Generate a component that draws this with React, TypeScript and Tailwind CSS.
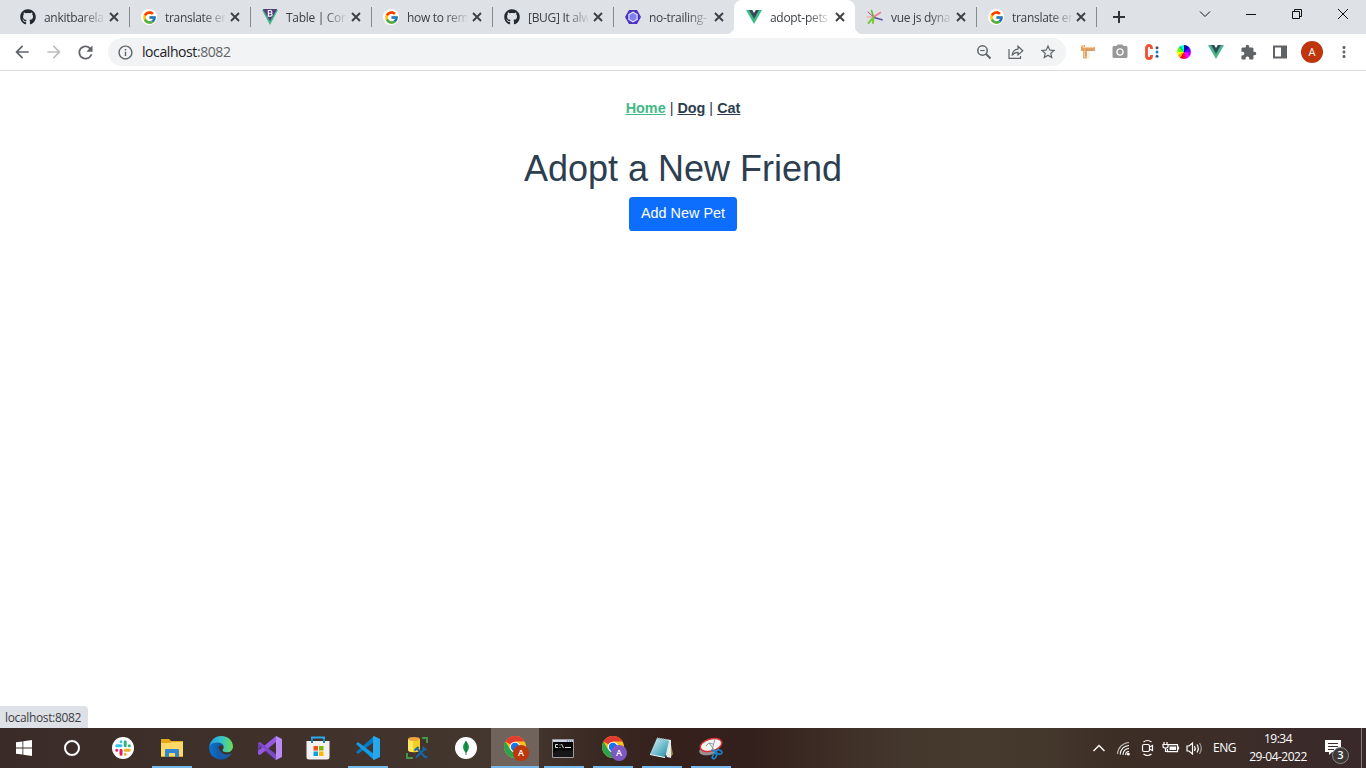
import React from "react";
import { FaGithub } from "react-icons/fa";
import { FcGoogle } from "react-icons/fc";
import {
  MdArrowBack,
  MdArrowForward,
  MdExtension,
  MdInfoOutline,
  MdMoreVert,
  MdPhotoCamera,
  MdRefresh,
  MdStarBorder,
} from "react-icons/md";

const ui = "font-['Open_Sans','Noto_Sans',sans-serif]";

function VueLogo({ size = 16 }: { size?: number }) {
  return (
    <svg width={size} height={size} viewBox="0 0 16 16">
      <path d="M0 1h16L8 15z" fill="#41b883" />
      <path d="M3 1h10L8 9.8z" fill="#34495e" />
      <path d="M6.2 1h3.6L8 4z" fill="#fff" />
    </svg>
  );
}

function BootstrapVue() {
  return (
    <svg width="16" height="16" viewBox="0 0 16 16">
      <path d="M0 1h3l5 9 5-9h3L8 16z" fill="#41b883" />
      <path d="M.8 0h14.400L8 12z" fill="#563d7c" />
      <path d="M6.300 1.500h2.200a1.400 1.400 0 010 2.800H6.300zM6.300 4.300h2.400a1.400 1.400 0 010 2.800H6.300z" fill="none" stroke="#fff" strokeWidth="1.100" />
    </svg>
  );
}

function GoogleDot() {
  return (
    <span className="flex size-4 shrink-0 items-center justify-center rounded-full bg-white">
      <FcGoogle size={15} />
    </span>
  );
}

function Hexagon() {
  return (
    <svg width="16" height="16" viewBox="0 0 16 16">
      <path d="M4 1h8l4 7-4 7H4L0 8z" fill="#4b32c3" />
      <path d="M8 2.600l4.700 2.700v5.400L8 13.400l-4.700-2.700V5.300z" fill="#e8e8fc" />
      <path d="M8 3.800l3.600 2.100v4.200L8 12.200l-3.600-2.100V5.900z" fill="#8080f2" />
    </svg>
  );
}

function Splash() {
  return (
    <svg width="16" height="16" viewBox="0 0 16 16" fill="none" strokeLinecap="round" className="shrink-0 overflow-visible">
      <path d="M6.500 8L4.500 1.500" stroke="#61bd3a" strokeWidth="1.600" />
      <path d="M6.500 8l7-4.500" stroke="#ec7b8e" strokeWidth="1.500" />
      <path d="M6 7.500L1 3" stroke="#a45087" strokeWidth="1" />
      <path d="M6 8H0" stroke="#f09b84" strokeWidth="1" />
      <path d="M7 8.500l8 2.300" stroke="#654fa8" strokeWidth="1.700" />
      <path d="M6.500 8.500L1.500 14M6.500 8.500L6 14" stroke="#75c93b" strokeWidth="2" />
    </svg>
  );
}

type Tab = { title: string; icon: React.ReactNode; active?: boolean; line?: boolean };

const tabs: Tab[] = [
  { title: "ankitbarela", icon: <FaGithub size={16} className="text-[#24292f]" />, line: true },
  { title: "translate en", icon: <GoogleDot />, line: true },
  { title: "Table | Com", icon: <BootstrapVue />, line: true },
  { title: "how to rem", icon: <GoogleDot />, line: true },
  { title: "[BUG] It alw", icon: <FaGithub size={16} className="text-[#24292f]" />, line: true },
  { title: "no-trailing-", icon: <Hexagon /> },
  { title: "adopt-pets", icon: <VueLogo />, active: true },
  { title: "vue js dyna", icon: <Splash />, line: true },
  { title: "translate en", icon: <GoogleDot />, line: true },
];

function TabStrip() {
  return (
    <div className="flex h-[34px] bg-[#dee1e6] pl-2 text-[#3c4043]">
      {tabs.map((t, i) => (
        <div
          key={i}
          className={
            "relative flex h-[34px] shrink-0 items-center pl-3 " +
            (i === 8 ? "w-[120px] " : "w-[121px] ") +
            (t.active ? "rounded-t-lg bg-white" : "")
          }
        >
          {t.active && (
            <>
              <span className="absolute bottom-0 -left-2 size-2 bg-[radial-gradient(circle_at_0_0,#dee1e6_8px,#fff_8.5px)]" />
              <span className="absolute -right-2 bottom-0 size-2 bg-[radial-gradient(circle_at_100%_0,#dee1e6_8px,#fff_8.5px)]" />
            </>
          )}
          <span className="flex w-4 shrink-0 justify-center">{t.icon}</span>
          <span className="ml-2 w-[60px] shrink-0 overflow-hidden pt-px text-[12px] tracking-[-0.3px] whitespace-nowrap [mask-image:linear-gradient(to_right,#000_38px,transparent_62px)]">
            {t.title}
          </span>
          <svg
            width="10"
            height="10"
            viewBox="0 0 10 10"
            stroke="#3c4043"
            strokeWidth="1.900"
            className={"shrink-0 " + (i === 8 ? "ml-1" : "ml-[5px]")}
          >
            <path d="M1 1l8 8M9 1L1 9" />
          </svg>
          {(t.line || i === 5) && (
            <span className="absolute top-[7px] right-[-1px] h-5 w-px bg-[#85888c]" />
          )}
        </div>
      ))}
      <div className="flex w-[45px] items-center justify-center">
        <svg width="12" height="12" viewBox="0 0 12 12" stroke="#303337" strokeWidth="2">
          <path d="M6 0v12M0 6h12" />
        </svg>
      </div>
      <svg className="ml-auto" width="184" height="28" viewBox="0 0 184 28" fill="none" stroke="#111" strokeWidth="1">
        <path d="M18 11.500l5 5 5-5" />
        <path d="M64 14.500h10" />
        <path d="M110.500 11.500h7v7h-7zM112.500 11.500v-2h7v7h-2" />
        <path d="M156 9l10 10M166 9l-10 10" />
      </svg>
    </div>
  );
}

function Toolbar() {
  return (
    <div className="flex h-[37px] items-center border-b border-[#d9dbdd] bg-white text-[#5f6368]">
      <div className="flex w-[108px] items-center gap-3 pl-3">
        <MdArrowBack size={20} />
        <MdArrowForward size={20} className="text-[#bbbdbf]" />
        <MdRefresh size={21} className="-ml-px" />
      </div>
      <div className="flex h-7 w-[958px] items-center rounded-full bg-[#f1f3f4] pl-[9px]">
        <MdInfoOutline size={17} />
        <span className="ml-2 pb-px text-[14px] tracking-[-0.42px] text-[#202124]">
          localhost<span className="text-[#5f6368]">:8082</span>
        </span>
        <div className="ml-auto flex items-center gap-4 pr-[10px]">
          <svg width="16" height="16" viewBox="0 0 16 16" fill="none" stroke="#5f6368" strokeWidth="1.500">
            <circle cx="6.500" cy="6.500" r="4.700" />
            <path d="M10 10l4.500 4.500" strokeWidth="1.900" />
            <path d="M4.300 6.500h4.400" strokeWidth="1.200" />
          </svg>
          <svg width="16" height="16" viewBox="0 0 16 16" fill="none" stroke="#5f6368" strokeWidth="1.200">
            <path d="M1 5v9.400h11.500V12" />
            <path d="M4 11.500C4.500 7.500 7 5.400 10 5.200V2.200l4.800 4.600L10 11V8.300c-2.600 0-4.500 1-6 3.200z" />
          </svg>
          <MdStarBorder size={18} className="-mx-px" />
        </div>
      </div>
      <div className="flex items-center gap-4 pl-[14px]">
        <svg width="16" height="16" viewBox="0 0 16 16">
          <path d="M4 5h6v10H4z" fill="#f8f1e6" />
          <path d="M3 5h4v9.500H3z" fill="#e8b177" />
          <path d="M1 1h4v2h10v4H1z" fill="#e3a467" />
          <path d="M1 1h3v2H1zM3 3h11v1H3zM4 7h1v6H4z" fill="#f6cb98" />
          <path d="M7 5v2M9.500 5v2M12 5v2M5 9h2M5 11h2" stroke="#bd8850" strokeWidth=".7" />
        </svg>
        <MdPhotoCamera size={18} className="-mx-px text-[#999]" />
        <svg width="16" height="16" viewBox="0 0 16 16">
          <path d="M7.500 5V4a2.500 2.500 0 00-5 0v8a2.500 2.500 0 005 0v-1" fill="none" stroke="#f05032" strokeWidth="2.800" />
          <circle cx="13" cy="3.800" r="1.500" fill="#4c5158" />
          <circle cx="13" cy="8" r="1.500" fill="#0c83dd" />
          <circle cx="13" cy="12.200" r="1.500" fill="#245c92" />
        </svg>
        <span className="flex size-4 items-center justify-center">
          <span className="size-[14px] rounded-full bg-[conic-gradient(#111_0_15deg,#00f_15deg_50deg,#60f_50deg_85deg,#b0f_85deg_120deg,#f0f_120deg_160deg,#f06_160deg_195deg,#f00_195deg_215deg,#fa0_215deg_245deg,#ff0_245deg_275deg,#6f0_275deg_310deg,#0d6_310deg_335deg,#0ff_335deg)]" />
        </span>
        <VueLogo />
        <MdExtension size={17} className="-mr-px" />
        <svg width="16" height="16" viewBox="0 0 16 16">
          <path d="M2 2.500h12v11H2z" fill="#fff" stroke="#5f6368" strokeWidth="2" />
          <path d="M9 2h5v12H9z" fill="#5f6368" />
        </svg>
        <span className="-mx-[3px] flex size-[22px] items-center justify-center rounded-full bg-[#bf360c] text-[11px] text-white">
          A
        </span>
        <MdMoreVert size={18} className="-ml-px" />
      </div>
    </div>
  );
}

function Slack() {
  return (
    <svg width="22" height="22" viewBox="0 0 22 22">
      <circle cx="11" cy="11" r="11" fill="#fff" />
      <g fill="none" strokeWidth="3" strokeLinecap="round">
        <path d="M9 4.700h.01M4.700 8.800H9" stroke="#36c5f0" />
        <path d="M13.200 4.700v4M17.300 8.800h.01" stroke="#2eb67d" />
        <path d="M13.200 13.200h4.100M13.200 17.300h.01" stroke="#ecb22e" />
        <path d="M9 13.200v4M4.700 13.200h.01" stroke="#e01e5a" />
      </g>
    </svg>
  );
}

function Explorer() {
  return (
    <svg width="22" height="20" viewBox="0 0 22 20">
      <path d="M0 1h8l2 2h12v16H0z" fill="#e8a81c" />
      <path d="M0 5h9l2-1h11v14H0z" fill="#ffd865" />
      <path d="M4 19v-7a1 1 0 011-1h12a1 1 0 011 1v7h-4v-4H8v4z" fill="#2e86cf" />
    </svg>
  );
}

function Edge() {
  return (
    <svg width="24" height="24" viewBox="0 0 24 24">
      <defs>
        <linearGradient id="edgeTop" x1="0" x2="1">
          <stop offset="0" stopColor="#2596df" />
          <stop offset=".5" stopColor="#30c4cf" />
          <stop offset="1" stopColor="#70dc52" />
        </linearGradient>
        <linearGradient id="edgeLow" x1="0" x2="1">
          <stop offset="0" stopColor="#0c75cc" />
          <stop offset="1" stopColor="#0c4b9b" />
        </linearGradient>
      </defs>
      <path d="M.2 11C1 4.500 6 0 12 0c7 0 12 4.700 12 10.500 0 3.500-2.800 5.800-6 5.800-3 0-4.500-1-4.500-2 0-.8 1.200-1.300 1.200-3 0-2.300-2.300-4.500-6-4.500C5 6.800 1.800 8.500.2 11z" fill="url(#edgeTop)" />
      <path d="M.1 11.300C1.500 7.500 5 6.500 8.700 6.700c3 .2 5 1.600 5.800 3.200C10.500 8.500 8 11 8 14c0 4.500 4.500 9 10 8A12 12 0 01.1 11.300z" fill="url(#edgeLow)" />
      <path d="M9.500 10.600C6.500 14 8 20 13 22.500c4 .8 7.500-1.500 9.400-4.500.2-.4-.1-.6-.4-.5C16 20 10 17 9.500 10.600z" fill="#1b5aa6" />
    </svg>
  );
}

function VisualStudio() {
  return (
    <svg width="24" height="24" viewBox="0 0 24 24">
      <path d="M0 7l2-1 16 12v6L2 11v8l-2-1z" fill="#6b3fb1" />
      <path d="M0 18l2 1L18 6V0L0 15z" fill="#9557e4" />
      <path d="M2 6l16 13v5L0 7z" fill="#7d4bc5" />
      <path d="M18 0l6 3v18l-6 3z" fill="#ba8af5" />
    </svg>
  );
}

function Store() {
  return (
    <svg width="24" height="24" viewBox="0 0 24 24" className="relative -left-px">
      <path d="M6 7V1.500h12V7" fill="none" stroke="#29a9e8" strokeWidth="2" />
      <path d="M.5 5h23v16a2.500 2.500 0 01-2.500 2.500H3A2.500 2.500 0 01.500 21z" fill="#f1f1f2" />
      <path d="M6 3v4M18 3v4" stroke="#1684bd" strokeWidth="2" />
      <path d="M7.500 10H12v4.500H7.500z" fill="#f25022" />
      <path d="M13 10h4.500v4.500H13z" fill="#7fba00" />
      <path d="M7.500 15.500H12V20H7.500z" fill="#00a4ef" />
      <path d="M13 15.500h4.500V20H13z" fill="#ffb900" />
    </svg>
  );
}

function Code() {
  return (
    <svg width="24" height="24" viewBox="0 0 24 24">
      <path d="M18 0L0 16l2 2 16-12z" fill="#0878bf" />
      <path d="M0 8l2-2 16 12v6z" fill="#139ce5" />
      <path d="M18 0l6 3v18l-6 3-1-1V1z" fill="#29a7ed" />
    </svg>
  );
}

function SqlStudio() {
  return (
    <svg width="24" height="24" viewBox="0 0 24 24">
      <path d="M17 2h5v5M2 17v5h6" fill="none" stroke="#459447" strokeWidth="2" />
      <path d="M3 3v11c0 3 12 3 12 0V3z" fill="#f6cf22" />
      <path d="M3 3v11c0 1 2 2 5 2V4z" fill="#ffe667" />
      <ellipse cx="9" cy="3" rx="6" ry="2" fill="#efa43e" />
      <g stroke="#1367ab" fill="none">
        <path d="M12.500 13l8 8.500M19.500 13L11 21.500" strokeWidth="2" />
        <path d="M9.500 14.500l4-3.500M18.500 10.500v3h3M20 20.500l2 1" strokeWidth="2" />
      </g>
    </svg>
  );
}

function Mongo() {
  return (
    <svg width="22" height="22" viewBox="0 0 22 22">
      <circle cx="11" cy="11" r="11" fill="#fff" />
      <path d="M11 4c3.800 4 4 8 0 12-4-4-3.800-8 0-12z" fill="#16984a" />
      <path d="M11 4v14" stroke="#116149" strokeWidth=".8" />
    </svg>
  );
}

function ChromeProfile({ violet }: { violet?: boolean }) {
  return (
    <span className="relative -right-px block size-6">
      <svg width="22" height="22" viewBox="0 0 22 22">
        <circle cx="11" cy="11" r="11" fill="#fbc21c" />
        <path d="M11 11L1.400 5.600A11 11 0 0120.600 5.600H11z" fill="#e33b2e" />
        <path d="M1.400 5.600A11 11 0 0010.500 22l5-8.500L11 11 6.300 13.800z" fill="#2ba24c" />
        <circle cx="11" cy="11" r="5.300" fill="#fff" />
        <circle cx="11" cy="11" r="4.200" fill="#1a73e8" />
      </svg>
      <span
        className={
          "absolute top-[9px] left-[9px] flex size-4 items-center justify-center rounded-full text-[9px] font-semibold text-white " +
          (violet ? "bg-[#7e57c2]" : "bg-[#bf360c]")
        }
      >
        A
      </span>
    </span>
  );
}

function Terminal() {
  return (
    <svg width="22" height="19" viewBox="0 0 22 19" className="relative -left-px">
      <path d="M.5.500h21v18H.500z" fill="#050505" stroke="#9b9fa4" />
      <path d="M1 1h20v2H1z" fill="#cbd2dd" />
      <path d="M15 2h1M17 2h1M19 2h1" stroke="#496eab" />
      <path d="M6 5.500H3.500v3H6M8 5.500v1M8 8v1M9.500 5l2 4M13 8.500h6" fill="none" stroke="#ddd" />
      <path d="M1 14c5-5 12-1 20-3v7H1z" fill="#292929" opacity=".5" />
    </svg>
  );
}

function Notepad() {
  return (
    <svg width="24" height="22" viewBox="0 0 24 22">
      <defs>
        <linearGradient id="note" x1="0" y1="0" x2="1" y2="1">
          <stop stopColor="#daf5f6" />
          <stop offset=".65" stopColor="#5cb0c3" />
          <stop offset="1" stopColor="#247b91" />
        </linearGradient>
      </defs>
      <path d="M20 3l3 14-2 3z" fill="#b18a40" />
      <path d="M8 1l13 2v18l-4-1z" fill="#e0ebec" />
      <path d="M7 1l12 3-4 17L0 17z" fill="url(#note)" />
      <path d="M7 1l12 2" stroke="#8aa5ae" strokeWidth="1.500" strokeDasharray="1 1" />
      <path d="M0 17l15 3v1L0 18z" fill="#effcfc" />
    </svg>
  );
}

function Snip() {
  return (
    <svg width="24" height="23" viewBox="0 0 24 23">
      <ellipse cx="10" cy="13" rx="10" ry="5" transform="rotate(-12 10 13)" fill="#9b8e8f" />
      <ellipse cx="12" cy="8" rx="11" ry="6" transform="rotate(-16 12 8)" fill="#f6f5f5" stroke="#d8343c" strokeWidth="1.500" />
      <path d="M10 6l6 8M16 2l-3 11M7 9l3-3 4 1" fill="none" stroke="#8a9294" strokeWidth=".9" />
      <g fill="none" stroke="#1684cb" strokeWidth="1.700">
        <ellipse cx="20" cy="15" rx="3" ry="2" transform="rotate(20 20 15)" />
        <ellipse cx="15.500" cy="19" rx="1.700" ry="3" transform="rotate(30 15.500 19)" />
        <path d="M12.500 13l5 2" />
      </g>
    </svg>
  );
}

const apps: { icon: React.ReactNode; open?: boolean; active?: boolean }[] = [
  { icon: <Slack /> },
  { icon: <Explorer />, open: true },
  { icon: <Edge /> },
  { icon: <VisualStudio /> },
  { icon: <Store /> },
  { icon: <Code />, open: true },
  { icon: <SqlStudio /> },
  { icon: <Mongo /> },
  { icon: <ChromeProfile />, active: true },
  { icon: <Terminal />, open: true },
  { icon: <ChromeProfile violet />, open: true },
  { icon: <Notepad />, open: true },
  { icon: <Snip />, open: true },
];

function Taskbar() {
  return (
    <div className="flex h-10 bg-[linear-gradient(90deg,#3a2b28_0%,#40322a_22%,#44372e_38%,#3a2923_44%,#35201c_49%,#33201c_55%,#3c2b24_60%,#44372d_66%,#463a2e_72%,#43362b_77%,#3c2d25_82%,#3d2d28_90%,#38282a_100%)] text-white">
      <div className="flex w-12 items-center justify-center">
        <svg width="16" height="16" viewBox="0 0 16 16" fill="#fff">
          <path d="M0 2.300L6.500 1.400v6.100H0zM7.300 1.300L16 0v7.500H7.300zM0 8.400h6.500v6.200L0 13.700zM7.300 8.400H16V16l-8.700-1.300z" />
        </svg>
      </div>
      <div className="flex w-12 items-center justify-center">
        <span className="size-4 rounded-full border-2 border-white" />
      </div>
      <div className="ml-[3px] flex gap-px">
        {apps.map((a, i) => (
          <div
            key={i}
            className={"flex h-10 w-12 flex-col items-center " + (a.active ? "bg-[#6f635b]" : "")}
          >
            <span className="flex h-[38px] items-center justify-center pt-[2px]">{a.icon}</span>
            {(a.open || a.active) && (
              <span className={"h-[2px] bg-[#76b9ed] " + (a.active ? "w-12" : "w-10")} />
            )}
          </div>
        ))}
      </div>
      <div className="ml-auto flex items-center">
        <svg width="112" height="20" viewBox="0 0 112 20" fill="none" stroke="#fff" strokeWidth="1.200">
          <path d="M1.500 13L7 7.500l5.500 5.500" strokeWidth="1.400" />
          <g strokeWidth="1.100">
            <path d="M25.500 16A12 12 0 0137 4.500" opacity=".65" />
            <path d="M28.200 16.500A9 9 0 0137 7.500M31 17a6 6 0 016-6.500M33.700 17a3.500 3.500 0 013.300-3.500" />
          </g>
          <circle cx="36.300" cy="16.200" r="1.400" fill="#fff" stroke="none" />
          <rect x="50.500" y="6.500" width="7" height="7" rx="1.500" />
          <path d="M57.500 9l3-1.500v5l-3-1.500M51.500 4q4-3 8 0M51.500 16q4 3 8 0" />
          <path d="M76 6.600h9.500v7h-10V11M86.500 8.500v3M72 4v2.500M75 4v2.500M71 6.500h5v2q0 1.500-2.500 1.500T71 8.500zM73.500 10v3.500h2" />
          <path d="M77.500 8.500H84V12h-6.500z" fill="#fff" stroke="none" />
          <path d="M95 8h2l3.500-3v11L97 13h-2zM102.500 8q1.500 2.500 0 5M105 6.500q2.500 4 0 8" />
          <path d="M107.500 5q3.500 5.500 0 11" opacity=".5" />
        </svg>
        <span className="ml-[9px] w-[23px] text-[12px] tracking-[-0.5px]">ENG</span>
        <div className="ml-[12px] w-[60px] text-center text-[12px] leading-[18px] tracking-[-0.5px] whitespace-nowrap">
          <div>19:34</div>
          <div>29-04-2022</div>
        </div>
        <div className="relative mt-[9px] ml-[17px] size-[26px]">
          <svg width="16" height="17" viewBox="0 0 16 17">
            <path d="M0 0h16v12H7l-3 3v-3H0z" fill="#fff" />
            <path d="M3 3.500h10M3 6.500h10M3 9.500h6" stroke="#3d2d28" />
          </svg>
          <span className="absolute top-[7px] left-[7px] flex size-[17px] items-center justify-center rounded-full border border-[#8e8986] bg-[#3b3837] text-[11px] font-semibold">
            3
          </span>
        </div>
        <span className="ml-[10px] h-10 w-[5px] border-l border-[#85807d]" />
      </div>
    </div>
  );
}

export default function App() {
  return (
    <div className={"flex h-[768px] w-[1366px] flex-col overflow-hidden bg-white " + ui}>
      <TabStrip />
      <Toolbar />
      <main className="relative flex flex-1 flex-col items-center font-['Liberation_Sans',Arial,sans-serif] text-[14.4px] text-[#2c3e50]">
        <nav className="pt-[27px] pb-[27px] leading-[21.6px]">
          <a className="font-bold text-[#42b983] underline">Home</a> |{" "}
          <a className="font-bold underline">Dog</a> | <a className="font-bold underline">Cat</a>
        </nav>
        <h1 className="mb-[7.2px] text-[36px] leading-[43.2px]">Adopt a New Friend</h1>
        <button className="h-[34px] w-[108px] rounded-[3.6px] bg-[#0d6efd] pb-px text-[14.4px] text-white">
          Add New Pet
        </button>
        <div className="absolute bottom-0 left-0 flex h-[22px] w-[88px] items-center rounded-tr bg-[#dee1e6] pt-[2px] pl-[5px] font-['Open_Sans','Noto_Sans',sans-serif] text-[12px] tracking-[-0.35px] text-[#3c4043]">
          localhost:8082
        </div>
      </main>
      <Taskbar />
    </div>
  );
}
